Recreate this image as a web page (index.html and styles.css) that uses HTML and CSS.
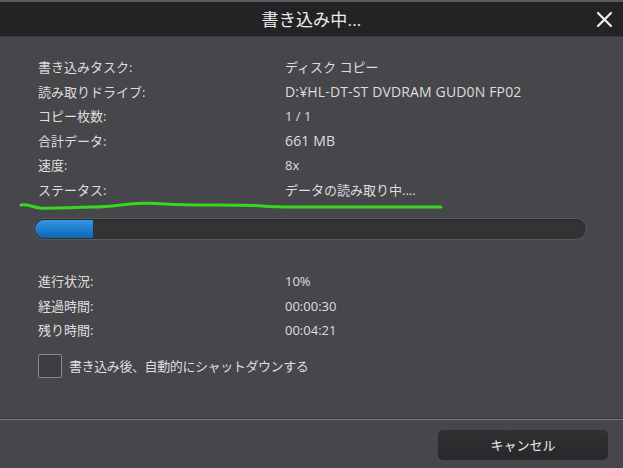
FILE: index.html
```html
<!DOCTYPE html>
<html lang="ja">
<head>
<meta charset="utf-8">
<title>書き込み中...</title>
<link rel="stylesheet" href="styles.css">
</head>
<body>
<div class="dialog">
  <header class="titlebar">
    <span></span>
    <h1 class="title">書き込み中...</h1>
    <button class="close" aria-label="閉じる">
      <svg width="17" height="17" viewBox="0 0 17 17"><path d="M2 2 L15 15 M15 2 L2 15" stroke="#f2f2f2" stroke-width="2.2" stroke-linecap="round"/></svg>
    </button>
  </header>

  <main class="content">
    <dl class="info">
      <dt>書き込みタスク:</dt><dd>ディスク コピー</dd>
      <dt>読み取りドライブ:</dt><dd class="wide">D:¥HL-DT-ST DVDRAM GUD0N FP02</dd>
      <dt>コピー枚数:</dt><dd>1 / 1</dd>
      <dt>合計データ:</dt><dd class="wide">661 MB</dd>
      <dt>速度:</dt><dd>8x</dd>
      <dt>ステータス:</dt><dd>データの読み取り中....</dd>
    </dl>

    <div class="progress"><div class="progress-fill" style="width: 10.5%"></div></div>

    <dl class="info info-time">
      <dt>進行状況:</dt><dd>10%</dd>
      <dt>経過時間:</dt><dd>00:00:30</dd>
      <dt>残り時間:</dt><dd>00:04:21</dd>
    </dl>

    <label class="check">
      <span class="box"></span>
      <span class="check-text">書き込み後、自動的にシャットダウンする</span>
    </label>

    <svg class="scribble" width="623" height="20" viewBox="0 0 623 20">
      <path d="M21 5 C28 4 32 7 40 8 C55 9 70 7 95 7 C110 7 118 5 130 4 C140 3 150 3 165 4 C180 5 195 5 215 5 C240 5 255 5 262 6 C272 7 280 7 300 7 L441 7" fill="none" stroke="#35d81c" stroke-width="3" stroke-linecap="round"/>
    </svg>
  </main>

  <footer class="footer">
    <button class="btn">キャンセル</button>
  </footer>
</div>
</body>
</html>
```

FILE: styles.css
```css
* { box-sizing: border-box; }

html, body {
  margin: 0;
  height: 100%;
  background: #47464b;
}

body {
  font-family: "Open Sans", "Noto Sans CJK JP", sans-serif;
  font-size: 13px;
  color: #dedede;
}

.dialog {
  width: 623px;
  height: 468px;
  display: flex;
  flex-direction: column;
  background: #47464b;
}

/* title bar */
.titlebar {
  height: 37px;
  border-top: 2px solid #5c5b60;
  border-bottom: 1px solid #3a393d;
  background: #232326;
  display: grid;
  grid-template-columns: 1fr auto 1fr;
  align-items: center;
}

.title {
  margin: 0;
  font-size: 17px;
  font-weight: 400;
  color: #ececec;
  letter-spacing: 0.2px;
  line-height: 1;
}

.close {
  justify-self: end;
  margin-right: 9px;
  width: 20px;
  height: 20px;
  padding: 0;
  border: 0;
  background: transparent;
  display: flex;
  align-items: center;
  justify-content: center;
}

/* body */
.content {
  position: relative;
  flex: 1;
  padding: 18px 36px 0 33px;
}

.info {
  margin: 0 0 0 5px;
  display: grid;
  grid-template-columns: 247px 1fr;
  line-height: 24.5px;
}

.info dt, .info dd {
  margin: 0;
  white-space: nowrap;
}

.info .wide {
  font-size: 14px;
  letter-spacing: 0.15px;
}

.progress {
  margin-top: 16px;
  height: 22px;
  border: 1px solid #58575c;
  border-radius: 11px;
  background: #333336;
  padding: 1px;
  box-shadow: inset 0 1px 1px rgba(0, 0, 0, 0.25);
}

.progress-fill {
  height: 100%;
  border-radius: 9px 0 0 9px;
  background: linear-gradient(#3398e0, #1b7ccc 55%, #1265ae);
}

.info-time {
  margin-top: 29px;
}

.check {
  margin: 11px 0 0 5px;
  display: flex;
  align-items: center;
  gap: 7px;
}

.check-text {
  letter-spacing: -0.4px;
}

.box {
  width: 24px;
  height: 24px;
  border: 1.5px solid #88878c;
  border-radius: 2px;
  background: #3d3c41;
}

.scribble {
  position: absolute;
  left: 0;
  top: 163px;
  pointer-events: none;
}

/* footer */
.footer {
  height: 50px;
  border-top: 1px solid #3b3a3e;
  box-shadow: inset 0 1px 0 #77767b;
  display: flex;
  justify-content: flex-end;
  align-items: flex-start;
  padding: 11px 15px 0 0;
}

.btn {
  width: 170px;
  height: 30px;
  border: 0;
  border-radius: 5px;
  background: linear-gradient(#303033, #28282b);
  color: #ececec;
  font-family: inherit;
  font-size: 13px;
  padding: 0 0 2px;
}
```
